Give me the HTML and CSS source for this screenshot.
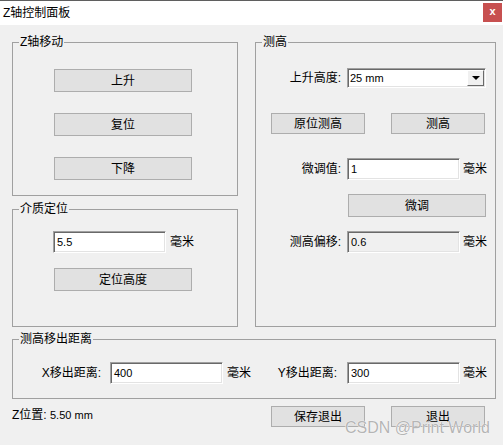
FILE: index.html
```html
<!DOCTYPE html>
<html>
<head>
<meta charset="utf-8">
<title>Z轴控制面板</title>
<link rel="stylesheet" href="styles.css">
</head>
<body>
<div class="window">
  <div class="titlebar">
    <span class="title">Z轴控制面板</span>
    <span class="close">x</span>
  </div>
  <div class="content">
    <div class="top">
      <div class="leftcol">
        <div class="group g-z">
          <span class="legend">Z轴移动</span>
          <button class="btn btn-wide">上升</button>
          <button class="btn btn-wide">复位</button>
          <button class="btn btn-wide">下降</button>
        </div>
        <div class="group g-medium">
          <span class="legend">介质定位</span>
          <div class="row">
            <div class="field">5.5</div><span class="unit">毫米</span>
          </div>
          <button class="btn btn-wide btn-locate">定位高度</button>
        </div>
      </div>
      <div class="group g-measure">
        <span class="legend">测高</span>
        <div class="row r-combo">
          <span class="label">上升高度:</span>
          <div class="combo">
            <span class="combo-value">25 mm</span>
            <span class="combo-btn"><span class="arrow"></span></span>
          </div>
        </div>
        <div class="row r-buttons">
          <button class="btn btn-mid">原位测高</button>
          <button class="btn btn-mid">测高</button>
        </div>
        <div class="row r-fine">
          <span class="label">微调值:</span>
          <div class="field">1</div><span class="unit">毫米</span>
        </div>
        <div class="row r-finebtn">
          <button class="btn btn-wide">微调</button>
        </div>
        <div class="row r-offset">
          <span class="label">测高偏移:</span>
          <div class="field field-disabled">0.6</div><span class="unit">毫米</span>
        </div>
      </div>
    </div>
    <div class="group g-move">
      <span class="legend">测高移出距离</span>
      <div class="row">
        <span class="label label-x">X移出距离:</span>
        <div class="field">400</div><span class="unit">毫米</span>
        <span class="label label-y">Y移出距离:</span>
        <div class="field">300</div><span class="unit">毫米</span>
      </div>
    </div>
    <div class="bottom">
      <span class="status">Z位置: <span class="num">5.50 mm</span></span>
      <div class="actions">
        <button class="btn btn-mid btn-short">保存退出</button>
        <button class="btn btn-mid btn-short">退出</button>
      </div>
    </div>
  </div>
  <div class="watermark">CSDN @Print World</div>
</div>
</body>
</html>
```
FILE: styles.css
```css
* {
  box-sizing: border-box;
  margin: 0;
  padding: 0;
}

body {
  margin: 0;
  background: #f0f0f0;
  font-family: "Liberation Sans", "Noto Sans CJK SC", sans-serif;
  font-size: 12px;
  line-height: 14px;
  color: #000;
}

.window {
  position: relative;
  width: 503px;
  height: 445px;
  background: #f0f0f0;
  overflow: hidden;
}

.titlebar {
  height: 25px;
  background: #fff;
  border-top: 1px solid #5f5f5f;
  display: flex;
  align-items: flex-start;
  justify-content: space-between;
  padding: 0 1px 0 3px;
}

.title {
  margin-top: 5px;
  font-size: 12px;
}

.close {
  margin-top: 2px;
  width: 19px;
  height: 19px;
  background: #c75050;
  color: #fff;
  font-weight: bold;
  font-size: 11px;
  line-height: 17px;
  text-align: center;
}

.content {
  padding: 17px 7px 0 12px;
}

.top {
  display: flex;
  gap: 17px;
}

.leftcol {
  width: 226px;
  display: flex;
  flex-direction: column;
  gap: 13px;
}

.group {
  position: relative;
  border: 1px solid #a0a0a0;
}

.legend {
  position: absolute;
  left: 6px;
  top: -8px;
  padding: 0 1px;
  background: #f0f0f0;
  line-height: 14px;
  white-space: nowrap;
}

.btn {
  display: flex;
  align-items: center;
  justify-content: center;
  background: #e1e1e1;
  border: 1px solid #adadad;
  font: inherit;
  color: #000;
  height: 23px;
  padding-top: 1px;
}

.btn-wide {
  width: 138px;
}

.btn-mid {
  width: 94px;
  height: 21px;
}

.g-z {
  height: 154px;
  display: flex;
  flex-direction: column;
  align-items: flex-start;
  gap: 21px;
  padding: 26px 0 0 41px;
}

.g-medium {
  height: 118px;
  padding: 21px 0 0 40px;
}

.btn-locate {
  margin: 15px 0 0 1px;
}

.row {
  display: flex;
  align-items: center;
}

.field {
  width: 113px;
  height: 22px;
  background: #fff;
  border: 1px solid;
  border-color: #a0a0a0 #fff #fff #a0a0a0;
  box-shadow: inset 1px 1px 0 #696969, inset -1px -1px 0 #e3e3e3;
  padding: 3px 0 0 3px;
  font-size: 11px;
  line-height: 14px;
  flex: none;
}

.field-disabled {
  background: #f0f0f0;
}

.unit {
  margin-left: 4px;
  white-space: nowrap;
}

.g-measure {
  width: 241px;
  height: 285px;
}

.g-measure .label {
  width: 85px;
  margin-right: 6px;
  text-align: right;
  white-space: nowrap;
}

.g-measure .unit {
  margin-left: 3px;
}

.r-combo {
  margin-top: 25px;
}

.combo {
  width: 139px;
  height: 20px;
  display: flex;
  background: #fff;
  border: 1px solid;
  border-color: #a0a0a0 #fff #fff #a0a0a0;
  box-shadow: inset 1px 1px 0 #696969, inset -1px -1px 0 #e3e3e3;
  padding: 1px;
}

.combo-value {
  flex: 1;
  padding: 1px 0 0 1px;
  font-size: 11px;
}

.combo-btn {
  width: 17px;
  height: 16px;
  background: #f0f0f0;
  border: 1px solid;
  border-color: #fff #696969 #696969 #fff;
  display: flex;
  align-items: center;
  justify-content: center;
}

.arrow {
  width: 0;
  height: 0;
  border-left: 4px solid transparent;
  border-right: 4px solid transparent;
  border-top: 4px solid #000;
}

.r-buttons {
  margin-top: 25px;
  padding-left: 15px;
  gap: 26px;
}

.r-fine {
  margin-top: 24px;
}

.r-finebtn {
  margin-top: 14px;
  padding-left: 92px;
}

.r-offset {
  margin-top: 14px;
}

.g-move {
  margin-top: 12px;
  height: 60px;
  padding-top: 22px;
}

.g-move .label {
  text-align: right;
  white-space: nowrap;
}

.label-x {
  width: 88px;
  margin-right: 9px;
}

.label-y {
  width: 86px;
  margin-right: 10px;
}

.g-move .unit {
  width: 24px;
}

.g-move .unit:last-child {
  margin-left: 3px;
}

.bottom {
  margin-top: 7px;
  height: 21px;
  display: flex;
  justify-content: space-between;
  align-items: flex-start;
}

.status {
  margin-top: 2px;
}

.num {
  font-size: 11px;
}

.actions {
  display: flex;
  gap: 26px;
  margin-right: 11px;
}

.watermark {
  position: absolute;
  left: 345px;
  top: 420px;
  font-family: "Liberation Sans", sans-serif;
  font-size: 16px;
  line-height: 16px;
  color: #b5b5b5;
  text-shadow: 0 0 1px #fff, 0 0 1px #fff;
  white-space: nowrap;
}
```
